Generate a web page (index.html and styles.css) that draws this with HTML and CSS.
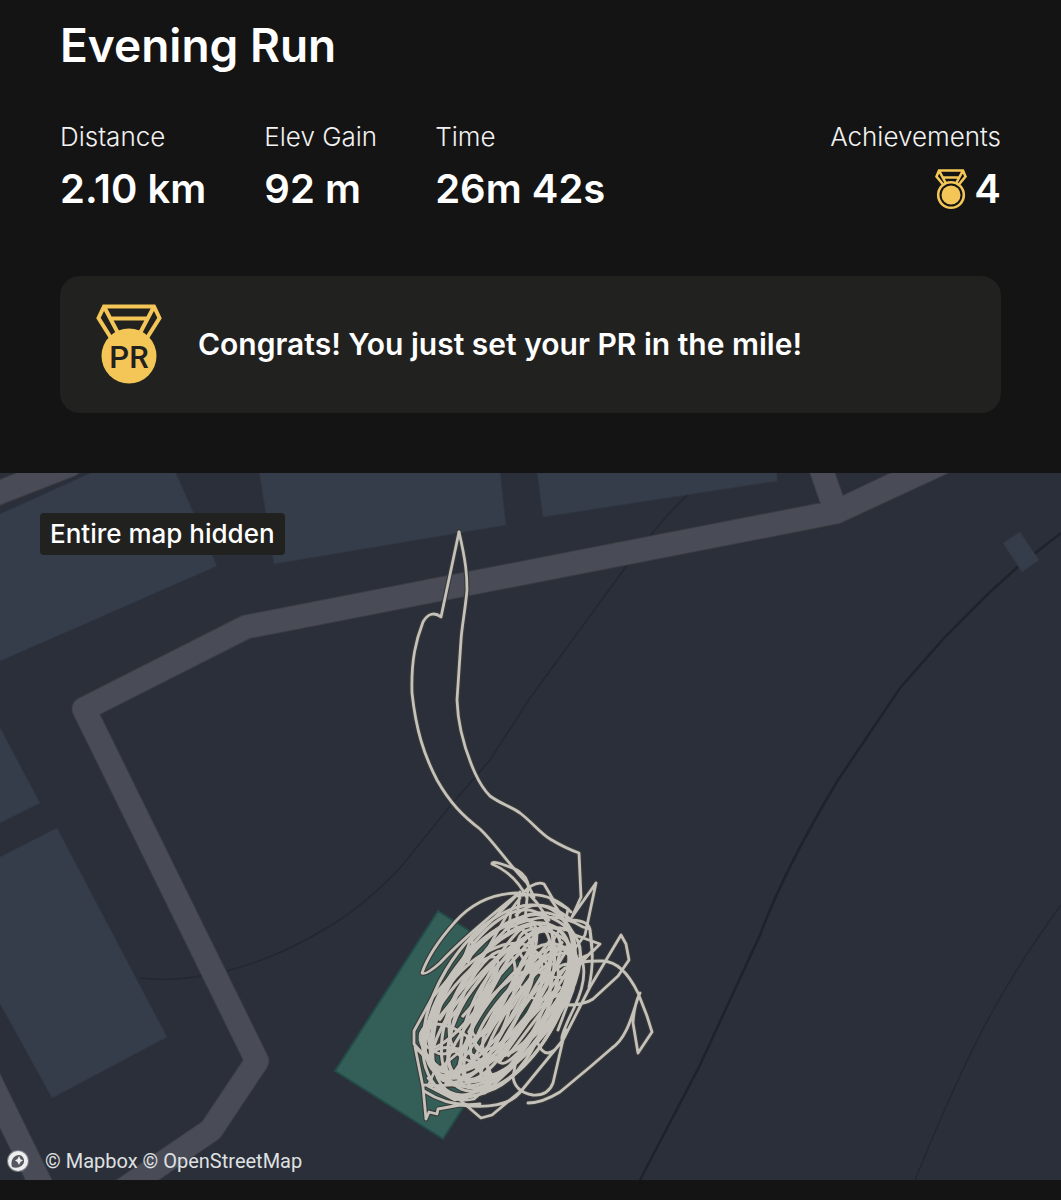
FILE: index.html
```html
<!DOCTYPE html>
<html lang="en">
<head>
<meta charset="utf-8">
<meta name="viewport" content="width=device-width, initial-scale=1">
<title>Evening Run</title>
<link rel="stylesheet" href="styles.css">
</head>
<body>
<article class="activity">
  <header class="summary">
    <h1 class="title">Evening Run</h1>
    <dl class="stats">
      <div class="stat"><dt>Distance</dt><dd>2.10 km</dd></div>
      <div class="stat"><dt>Elev Gain</dt><dd>92 m</dd></div>
      <div class="stat"><dt>Time</dt><dd>26m 42s</dd></div>
      <div class="stat stat-end">
        <dt>Achievements</dt>
        <dd>
          <svg class="medal-small" viewBox="0 0 34 42" aria-hidden="true">
            <g fill="none" stroke="#f3c657" stroke-width="2.6">
              <path d="M9.500 17 2.500 8.500 5 2.500H29L31.500 8.500 24.500 17M5 2.500 12 15.500M29 2.500 22 15.500M8.500 9.500H25.500"/>
              <circle cx="17" cy="27" r="12.800"/>
            </g>
            <circle cx="17" cy="27" r="9.500" fill="#f3c657"/>
          </svg>
          4
        </dd>
      </div>
    </dl>
    <section class="congrats">
      <svg class="medal-pr" viewBox="0 0 66 80" aria-hidden="true">
        <path d="M15 34 2.500 14 8 2.500H58L63.500 14 51 34M8 2.500 23 31M58 2.500 43 31M15 14.500H51" fill="none" stroke="#f3c657" stroke-width="4"/>
        <circle cx="33" cy="52" r="27.500" fill="#f3c657"/>
        <text class="medal-text" x="33" y="64" text-anchor="middle">PR</text>
      </svg>
      <p>Congrats! You just set your PR in the mile!</p>
    </section>
  </header>

  <section class="map">
    <svg class="map-canvas" viewBox="0 473 1061 707" role="img" aria-label="Route map">
      <rect y="473" width="1061" height="707" fill="#2b2f39"/>
      <g fill="none" stroke="#232730" stroke-width="2">
        <path d="M690 493C665 515 645 542 625 568L530 698 490 760 450 806 400 868Q365 905 330 926 280 957 230 970T140 978" stroke-width="1.500"/>
        <path d="M1061 533 1020 565 990 592 945 637 900 688 838 780Q785 868 760 935L700 1065 640 1180" stroke="#1f222b" stroke-width="2.500"/>
        <path d="M1061 905Q1015 968 985 1025T915 1180" stroke-width="1.500"/>
      </g>
      <g fill="#363d4a" stroke="#303744">
        <path d="M-2 515 95 471H175L217 566-2 662Z"/>
        <path d="M259 471H500L506 525 274 564Z"/>
        <path d="M537 471 543 517 777 481V471Z"/>
        <path d="M-2 724 40 803-2 824Z"/>
        <path d="M-2 858 57 828 167 1037 52 1098-2 1000Z"/>
        <path d="M1003 543 1020 532 1039 560 1022 572Z"/>
      </g>
      <g fill="none" stroke-linejoin="round">
        <g stroke="#3b3d42" stroke-width="25">
          <path id="road" stroke-linecap="round" d="M918 473 836 512 246 627 84 709 257 1061 211 1130 120 1192M1000 436 836 512 818 460M-20 500 70 465M-20 1060 46 1195"/>
        </g>
        <use href="#road" stroke="#494c57" stroke-width="23"/>
      </g>
      <path d="M438 911 546 979 443 1139 335 1071Z" fill="#345f58" stroke="#244b47" stroke-width="2"/>
      <defs>
        <g id="route">
          <path d="M459 532 441 617C435 612 428 613 423 622C416 640 411 660 412 693C416 730 424 755 437 780C450 803 463 816 480 829C495 843 503 858 527 883L534 897"/>
          <path d="M459 532C466 562 467 575 467 590C465 612 462 625 461 640L457 700C458 730 467 755 475 773C481 786 485 791 490 796C501 804 510 806 520 813C532 822 540 833 550 839Q565 848 579 853L581 897 572 917 596 883 585 935 570 955"/>
          <path d="M527 898C518 879 504 869 492 864C491 859 510 867 517 870Q528 876 529 889M520 898 511 910 508 935M522 894Q535 880 544 884L554 901 568 909 564 930M530 895 537 903 549 920M517 893Q480 894 455 922T422 973Q425 976 440 963 464 937 520 892M518 894 472 940Q474 950 468 962M520 892 517 918 486 950M528 888 525 920"/>
          <path d="M516 915Q535 897 560 912L572 920Q590 921 590 931L592 951 575 970M510 925Q540 900 575 935L600 944 590 954 565 965M505 930Q548 906 583 927L590 929Q595 960 589 987M550 898 576 937M518 896Q549 890 571 912"/>
          <path d="M560 972C575 960 591 961 603 961Q623 962 638 993L647 1016 652 1032 638 1053 633 1023Q634 1005 640 993M638 998C632 1015 627 1038 612 1048L590 1067 560 1092Q542 1103 528 1103"/>
          <path d="M558 1005Q583 1006 593 999L618 976 629 960 626 944 621 935 590 987 563 1040 522 1090 492 1115 481 1118 460 1100 438 1086M580 955Q590 975 574 1008T563 1040L553 1083Q548 1096 533 1095 515 1092 513 1077L517 1055M537 1041Q541 1053 548 1053 559 1051 567 1030M575 970 573 990 558 1030"/>
          <path d="M415 1047 423 1087 426 1119 429 1112 437 1114 438 1109 460 1105Q508 1111 522 1090M424 1091Q450 1108 480 1104M428 1078Q448 1105 474 1099L490 1085M425 1085Q460 1088 500 1075M418 1050 436 1068 428 1086 455 1100 485 1093 515 1065"/>
          <path d="M472 936 462 963 432 998 414 1031V1044L428 1060M508 913 470 980 420 1040M539 930 498 1010 445 1085M560 929 512 1008 440 1068"/>
          <g transform="translate(498 1001) rotate(31) scale(1.12 1.04)">
            <ellipse cx="0" cy="0" rx="54" ry="102"/>
            <ellipse cx="3" cy="-4" rx="47" ry="96" transform="rotate(4)"/>
            <ellipse cx="-3" cy="3" rx="43" ry="96" transform="rotate(-5)"/>
            <ellipse cx="9" cy="1" rx="45" ry="90"/>
            <ellipse cx="13" cy="-7" rx="38" ry="88" transform="rotate(7)"/>
            <ellipse cx="-8" cy="4" rx="40" ry="87" transform="rotate(3)"/>
            <ellipse cx="-12" cy="10" rx="34" ry="82" transform="rotate(-4)"/>
            <ellipse cx="17" cy="-10" rx="32" ry="78" transform="rotate(-3)"/>
            <ellipse cx="4" cy="-13" rx="40" ry="77" transform="rotate(6)"/>
            <ellipse cx="-6" cy="14" rx="37" ry="74" transform="rotate(8)"/>
            <ellipse cx="21" cy="4" rx="27" ry="81" transform="rotate(5)"/>
            <ellipse cx="13" cy="14" rx="33" ry="72" transform="rotate(-7)"/>
            <ellipse cx="-19" cy="-3" rx="27" ry="78" transform="rotate(5)"/>
            <ellipse cx="0" cy="3" rx="28" ry="88" transform="rotate(9)"/>
            <ellipse cx="24" cy="-16" rx="22" ry="63" transform="rotate(9)"/>
            <ellipse cx="9" cy="-3" rx="20" ry="82" transform="rotate(-3)"/>
            <ellipse cx="-9" cy="18" rx="22" ry="65" transform="rotate(-9)"/>
            <ellipse cx="16" cy="-18" rx="16" ry="66" transform="rotate(11)"/>
            <ellipse cx="27" cy="8" rx="16" ry="66"/>
            <ellipse cx="6" cy="21" rx="14" ry="62" transform="rotate(8)"/>
            <ellipse cx="-25" cy="22" rx="14" ry="54" transform="rotate(6)"/>
            <ellipse cx="-4" cy="-19" rx="14" ry="59" transform="rotate(-4)"/>
            <ellipse cx="33" cy="-9" rx="11" ry="57" transform="rotate(3)"/>
            <ellipse cx="16" cy="-64" rx="29" ry="20"/>
            <ellipse cx="13" cy="-52" rx="23" ry="29" transform="rotate(12)"/>
            <ellipse cx="-8" cy="73" rx="29" ry="16" transform="rotate(-8)"/>
            <ellipse cx="-3" cy="65" rx="35" ry="20" transform="rotate(6)"/>
            <path d="M22-80V35M29-73V50M15-60 19 65M36-60 29 48M41-42 33 40M8 72V10M1-54 7 25M-12-60-8 40M-20-40-30 50M-33-20-36 44M45-30 38 30M-2-70-20 30M12-75 2 10"/>
          </g>
        </g>
      </defs>
      <g fill="none" stroke-linecap="round" stroke-linejoin="round">
        <use href="#route" stroke="#3a3a38" stroke-width="5"/>
        <use href="#route" stroke="#c5c2bc" stroke-width="2.800"/>
      </g>
    </svg>
    <span class="privacy">Entire map hidden</span>
    <footer class="attribution">
      <svg class="mapbox" viewBox="0 0 24 24" aria-hidden="true">
        <circle cx="12" cy="12" r="11" fill="#777a82"/>
        <circle cx="12" cy="12" r="10" fill="#eeeeef"/>
        <path d="M6 18C4 11 8 6 13 6A5.500 5.500 0 0 1 18 12C18 17 12 20 6 18Z" fill="#555861"/>
        <path d="M13 7 14.400 10 17 11.500 14.400 13 13 16 11.500 13 9 11.500 11.500 10Z" fill="#eeeeef"/>
      </svg>
      <span>© Mapbox © OpenStreetMap</span>
    </footer>
  </section>
</article>
</body>
</html>
```
FILE: styles.css
```css
* {
  box-sizing: border-box;
}

body {
  margin: 0;
  min-height: 100vh;
  background: #141414;
  color: #fff;
  font-family: Inter, "Liberation Sans", sans-serif;
}

.activity {
  padding-bottom: 20px;
}

.summary {
  padding: 15px 60px 60px;
}

.title {
  margin: 0;
  font-size: 46px;
  line-height: 60px;
  font-weight: 600;
}

.stats {
  display: flex;
  gap: 58px;
  margin: 46px 0 63px;
}

.stat dt {
  font-size: 26px;
  line-height: 32px;
  font-weight: 300;
  color: #f2f2f2;
}

.stat dd {
  display: flex;
  align-items: center;
  gap: 6px;
  margin: 12px 0 0;
  font-size: 40px;
  line-height: 48px;
  font-weight: 600;
}

.stat-end {
  margin-left: auto;
}

.stat-end dd {
  justify-content: flex-end;
}

.medal-small {
  width: 34px;
  height: 42px;
}

.congrats {
  display: flex;
  align-items: center;
  gap: 36px;
  padding: 28px 36px 29px;
  border-radius: 20px;
  background: #212120;
}

.congrats p {
  margin: 0;
  font-size: 30px;
  line-height: 40px;
  font-weight: 600;
}

.medal-pr {
  flex: none;
  width: 66px;
  height: 80px;
}

.medal-text {
  font-family: Roboto, sans-serif;
  font-size: 31px;
  font-weight: 500;
  fill: #212120;
}

.map {
  position: relative;
}

.map-canvas {
  display: block;
  width: 100%;
  height: auto;
}

.privacy {
  position: absolute;
  top: 40px;
  left: 40px;
  padding: 4px 10px;
  border-radius: 4px;
  background: #212120;
  font-size: 26px;
  line-height: 34px;
  font-weight: 500;
}

.attribution {
  position: absolute;
  left: 6px;
  bottom: 6px;
  display: flex;
  align-items: center;
  gap: 15px;
  font-family: Roboto, sans-serif;
  font-size: 20px;
  line-height: 26px;
  color: #dfe0e2;
}

.mapbox {
  width: 24px;
  height: 24px;
}
```
